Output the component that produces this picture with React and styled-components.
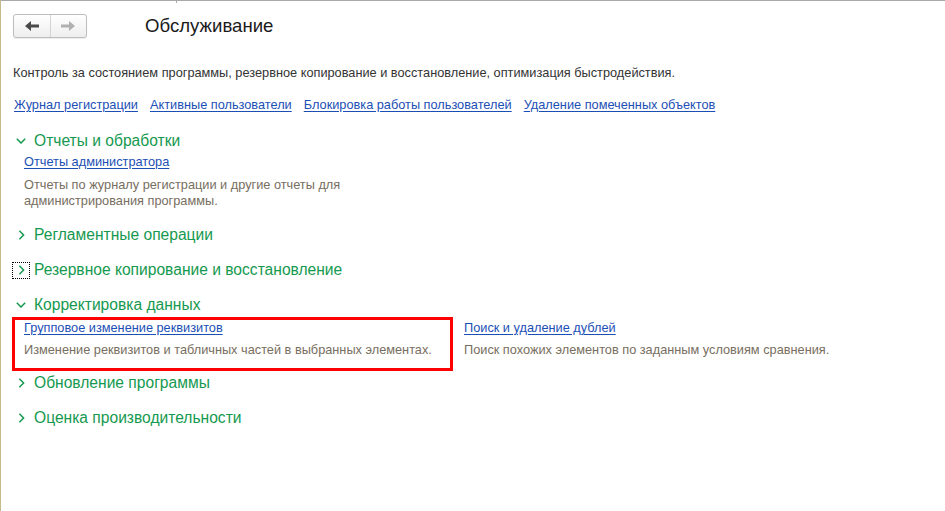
import React from "react";
import styled, { createGlobalStyle } from "styled-components";

const Global = createGlobalStyle`
  html, body { margin: 0; padding: 0; background: #fff; }
  body { font-family: "Liberation Sans", Arial, sans-serif; }
`;

const Page = styled.div`
  position: relative;
  box-sizing: border-box;
  height: 511px;
  border-top: 1px solid #a9a9a9;
  border-left: 1px solid #c5ba8c;
  padding: 13px 0 0 12px;
  color: #333;
`;

const Tick = styled.div`
  position: absolute;
  top: -1px;
  left: 175px;
  width: 1px;
  height: 3px;
  background: #a9a9a9;
`;

const Header = styled.div`
  display: flex;
  align-items: center;
  height: 24px;
`;

const NavGroup = styled.div`
  display: flex;
  box-sizing: border-box;
  width: 74px;
  height: 24px;
  border: 1px solid #bdbdbd;
  border-radius: 3px;
  background: linear-gradient(#ffffff, #eeeeee);
  box-shadow: 0 1px 1px rgba(0, 0, 0, 0.08);
`;

const NavButton = styled.div`
  flex: 1;
  display: flex;
  align-items: center;
  justify-content: center;
  border-left: ${(p) => (p.$divider ? "1px solid #d4d4d4" : "none")};
`;

const Title = styled.div`
  margin-left: 58px;
  font-size: 18.6px;
  color: #1a1a1a;
`;

const Lead = styled.div`
  margin-top: 27px;
  font-size: 12.75px;
  line-height: 16px;
  color: #333;
`;

const LinkRow = styled.div`
  display: flex;
  gap: 12px;
  margin-top: 16px;
  padding-left: 1px;
`;

const Link = styled.a`
  font-size: 12.75px;
  line-height: 16px;
  color: #1c4fb5;
  text-decoration: underline;
  text-underline-offset: 2px;
  cursor: pointer;
  white-space: nowrap;
`;

const Sections = styled.div`
  margin-top: 18px;
  display: flex;
  flex-direction: column;
`;

const Group = styled.div`
  display: flex;
  flex-direction: column;
`;

const GroupTitle = styled.div`
  display: flex;
  align-items: center;
  height: 20px;
  margin-top: ${(p) => p.$mt}px;
  font-size: 15.6px;
  color: #15994f;
`;

const ChevronBox = styled.div`
  box-sizing: border-box;
  display: flex;
  align-items: center;
  justify-content: center;
  width: 18px;
  height: 17px;
  margin-left: -1px;
  margin-right: 4px;
  border: 1px dotted ${(p) => (p.$focus ? "#000" : "transparent")};
`;

const Items = styled.div`
  display: grid;
  grid-template-columns: 441px 420px;
  column-gap: 10px;
  margin-left: -1px;
  margin-top: ${(p) => p.$mt}px;
`;

const Item = styled.div`
  box-sizing: border-box;
  display: flex;
  flex-direction: column;
  gap: ${(p) => p.$gap}px;
  padding: 0 9px 10px 9px;
  border: 3px solid ${(p) => (p.$marked ? "#ff0000" : "transparent")};
  ${(p) => (p.$plain ? "padding-left: 1px; border-left: 0;" : "")}
`;

const Desc = styled.div`
  font-size: 12.75px;
  line-height: 16px;
  color: #776e60;
`;

const ArrowLeft = ({ color }) => (
  <svg width="14" height="10" viewBox="0 0 14 10">
    <path d="M0 5 L6 0 V3.5 H14 V6.5 H6 V10 Z" fill={color} />
  </svg>
);

const ArrowRight = ({ color }) => (
  <svg width="14" height="10" viewBox="0 0 14 10">
    <path d="M14 5 L8 0 V3.5 H0 V6.5 H8 V10 Z" fill={color} />
  </svg>
);

const Chevron = ({ open }) =>
  open ? (
    <svg width="10" height="6" viewBox="0 0 10 6">
      <path d="M0.8 0.8 L5 5 L9.2 0.8" fill="none" stroke="#15994f" strokeWidth="1.5" />
    </svg>
  ) : (
    <svg width="7" height="10" viewBox="0 0 7 10">
      <path d="M1.4 0.8 L5.6 5 L1.4 9.2" fill="none" stroke="#15994f" strokeWidth="1.5" />
    </svg>
  );

const GroupHeader = ({ open, focus, mt, children }) => (
  <GroupTitle $mt={mt}>
    <ChevronBox $focus={focus}>
      <Chevron open={open} />
    </ChevronBox>
    <span>{children}</span>
  </GroupTitle>
);

export default function App() {
  return (
    <>
      <Global />
      <Page>
        <Tick />
        <Header>
          <NavGroup>
            <NavButton>
              <ArrowLeft color="#4a4a4a" />
            </NavButton>
            <NavButton $divider>
              <ArrowRight color="#b0b0b0" />
            </NavButton>
          </NavGroup>
          <Title>Обслуживание</Title>
        </Header>
        <Lead>
          Контроль за состоянием программы, резервное копирование и восстановление, оптимизация быстродействия.
        </Lead>
        <LinkRow>
          <Link>Журнал регистрации</Link>
          <Link>Активные пользователи</Link>
          <Link>Блокировка работы пользователей</Link>
          <Link>Удаление помеченных объектов</Link>
        </LinkRow>
        <Sections>
          <Group>
            <GroupHeader open mt={0}>Отчеты и обработки</GroupHeader>
            <Items $mt={0}>
              <Item $gap={7}>
                <Link>Отчеты администратора</Link>
                <Desc>
                  Отчеты по журналу регистрации и другие отчеты для администрирования программы.
                </Desc>
              </Item>
            </Items>
          </Group>
          <GroupHeader mt={3}>Регламентные операции</GroupHeader>
          <GroupHeader focus mt={15}>Резервное копирование и восстановление</GroupHeader>
          <Group>
            <GroupHeader open mt={15}>Корректировка данных</GroupHeader>
            <Items $mt={2}>
              <Item $marked $gap={6}>
                <Link>Групповое изменение реквизитов</Link>
                <Desc>Изменение реквизитов и табличных частей в выбранных элементах.</Desc>
              </Item>
              <Item $plain $gap={6}>
                <Link>Поиск и удаление дублей</Link>
                <Desc>Поиск похожих элементов по заданным условиям сравнения.</Desc>
              </Item>
            </Items>
          </Group>
          <GroupHeader mt={2}>Обновление программы</GroupHeader>
          <GroupHeader mt={15}>Оценка производительности</GroupHeader>
        </Sections>
      </Page>
    </>
  );
}
